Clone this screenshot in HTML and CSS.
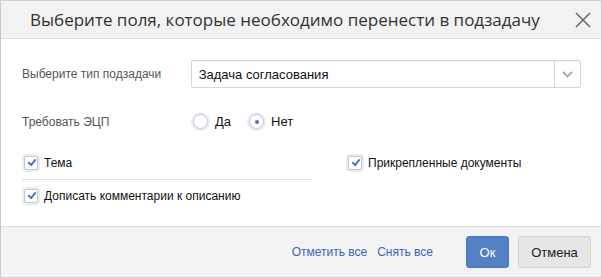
FILE: index.html
```html
<!DOCTYPE html>
<html lang="ru">

<head>
    <meta charset="UTF-8" />
    <meta name="viewport" content="width=device-width, initial-scale=1.0" />
    <title>Перенос полей в подзадачу</title>
    <link rel="stylesheet" href="styles.css">
</head>

<body>
    <div class="dialog">
        <header class="dialog-header">
            <h1 class="dialog-title">Выберите поля, которые необходимо перенести в подзадачу</h1>
            <button class="close-btn" aria-label="Закрыть">
                <svg width="16" height="16" viewBox="0 0 16 16">
                    <path d="M1 1 L15 15 M15 1 L1 15" stroke="#6b6b6b" stroke-width="1.6" fill="none" />
                </svg>
            </button>
        </header>

        <main class="dialog-body">
            <div class="form-row">
                <span class="form-label">Выберите тип подзадачи</span>
                <div class="select">
                    <span class="select-value">Задача согласования</span>
                    <span class="select-arrow">
                        <svg width="11" height="7" viewBox="0 0 11 7">
                            <path d="M1 1 L5.5 5.5 L10 1" stroke="#a9a9a9" stroke-width="1.8" fill="none" />
                        </svg>
                    </span>
                </div>
            </div>

            <div class="form-row sign-row">
                <span class="form-label">Требовать ЭЦП</span>
                <div class="radio-group">
                    <label class="radio"><span class="radio-dot"></span>Да</label>
                    <label class="radio checked"><span class="radio-dot"></span>Нет</label>
                </div>
            </div>

            <div class="fields">
                <div class="fields-col">
                    <label class="check bordered"><span class="check-box"></span>Тема</label>
                    <label class="check"><span class="check-box"></span>Дописать комментарии к описанию</label>
                </div>
                <div class="fields-col">
                    <label class="check"><span class="check-box"></span>Прикрепленные документы</label>
                </div>
            </div>
        </main>

        <footer class="dialog-footer">
            <a href="#" class="link">Отметить все</a>
            <a href="#" class="link">Снять все</a>
            <button class="btn btn-primary">Ок</button>
            <button class="btn btn-default">Отмена</button>
        </footer>
    </div>
</body>

</html>
```

FILE: styles.css
```css
* {
    margin: 0;
    padding: 0;
    box-sizing: border-box;
}

body {
    width: 602px;
    height: 278px;
    font-family: "Liberation Sans", Arial, sans-serif;
    font-size: 12px;
    color: #222;
    background: #fff;
}

.dialog {
    display: flex;
    flex-direction: column;
    height: 278px;
    border: 1px solid #cfd1d6;
    border-left-color: #c5cad8;
    border-right-color: #c5cad8;
}

/* Header */
.dialog-header {
    display: flex;
    align-items: center;
    height: 38px;
    padding: 0 0 0 29px;
    background: #f2f2f2;
    border-bottom: 1px solid #dedede;
}

.dialog-title {
    flex: 1;
    font-family: "Open Sans", sans-serif;
    font-weight: 400;
    font-size: 17px;
    color: #333;
}

.close-btn {
    width: 30px;
    height: 30px;
    margin-right: 3px;
    border: none;
    background: transparent;
    display: flex;
    align-items: center;
    justify-content: center;
}

/* Body */
.dialog-body {
    flex: 1;
    padding: 21px 20px 0 21px;
}

.form-row {
    display: flex;
    align-items: center;
}

.form-label {
    width: 169px;
    color: #555;
}

.select {
    display: flex;
    width: 391px;
    height: 28px;
    border: 1px solid #d6d6d6;
    border-radius: 2px;
    box-shadow: inset 0 1px 1px rgba(0, 0, 0, 0.04);
}

.select-value {
    flex: 1;
    display: flex;
    align-items: center;
    padding-left: 7px;
    font-size: 13px;
    color: #111;
}

.select-arrow {
    width: 26px;
    border-left: 1px solid #d6d6d6;
    display: flex;
    align-items: center;
    justify-content: center;
}

.sign-row {
    margin-top: 26px;
}

.radio-group {
    display: flex;
    gap: 18px;
    padding-left: 2px;
    font-size: 13px;
}

.radio {
    display: flex;
    align-items: center;
    gap: 7px;
    color: #111;
}

.radio-dot {
    width: 15px;
    height: 15px;
    border-radius: 50%;
    border: 1px solid #c8c8c8;
    background: #fff;
    box-shadow: 0 0 0 2px #e8ecf4;
    display: flex;
    align-items: center;
    justify-content: center;
}

.radio.checked .radio-dot::after {
    content: "";
    width: 4px;
    height: 4px;
    border-radius: 50%;
    background: #4a74bb;
}

/* Field checkboxes */
.fields {
    display: flex;
    margin-top: 25px;
}

.fields-col:first-child {
    width: 291px;
}

.fields-col:last-child {
    padding-left: 33px;
}

.check {
    display: flex;
    align-items: center;
    gap: 6px;
    height: 17px;
    color: #111;
}

.check.bordered {
    box-sizing: content-box;
    padding-bottom: 8px;
    border-bottom: 1px solid #e3e3e3;
    margin-bottom: 7px;
}

.check-box {
    position: relative;
    width: 14px;
    height: 14px;
    margin-left: 2px;
    border: 1px solid #c7c7c7;
    border-radius: 2px;
    background: #fff;
    box-shadow: 0 0 0 2px #e8ecf4;
}

.check-box::after {
    content: "";
    position: absolute;
    left: 3px;
    top: 2px;
    width: 6px;
    height: 3px;
    border-left: 2px solid #4a74bb;
    border-bottom: 2px solid #4a74bb;
    transform: rotate(-50deg);
}

/* Footer */
.dialog-footer {
    display: flex;
    align-items: center;
    height: 51px;
    padding: 0 10px 0 0;
    justify-content: flex-end;
    background: #f3f3f3;
    border-top: 1px solid #dedede;
}

.link {
    color: #3f63b5;
    text-decoration: none;
    margin-right: 10px;
}

.link + .link {
    margin-right: 33px;
}

.btn {
    height: 32px;
    border-radius: 3px;
    font-family: "Liberation Sans", Arial, sans-serif;
    font-size: 13px;
    cursor: pointer;
}

.btn-primary {
    width: 43px;
    margin-right: 9px;
    border: 1px solid #4c7bbd;
    background: #5381c4;
    color: #fff;
}

.btn-default {
    width: 73px;
    border: 1px solid #d3d3d3;
    background: #e6e6e6;
    color: #222;
}
```
